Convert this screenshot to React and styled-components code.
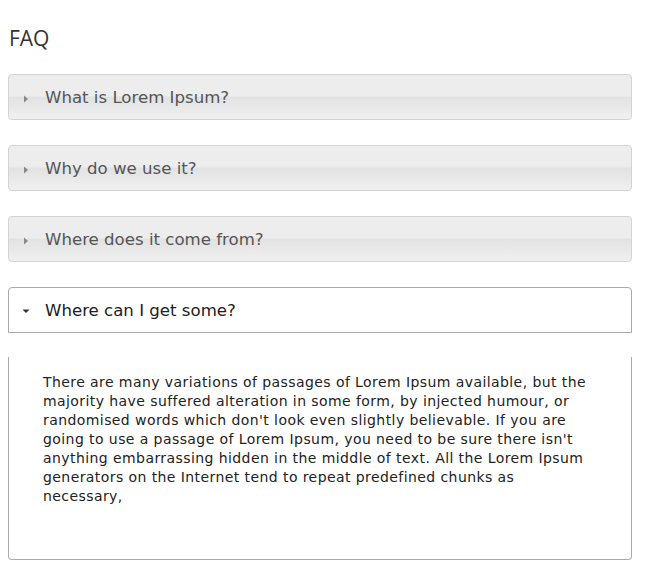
import React, { useState } from "react";
import styled, { createGlobalStyle } from "styled-components";

const Global = createGlobalStyle`
  html, body { margin: 0; padding: 0; background: #fff; }
  body { padding: 8px; font-family: "DejaVu Sans", Verdana, sans-serif; }
`;

const Page = styled.div`
  width: 624px;
  display: flex;
  flex-direction: column;
`;

const Title = styled.h2`
  margin: 15px 0 0 1px;
  font-family: "Open Sans", "Noto Sans", sans-serif;
  font-weight: 400;
  font-size: 21px;
  line-height: 30px;
  color: #333;
`;

const Accordion = styled.div`
  margin-top: 21px;
  display: flex;
  flex-direction: column;
  gap: 25px;
`;

const Item = styled.div`
  display: flex;
  flex-direction: column;
  gap: 24px;
`;

const Header = styled.button`
  box-sizing: border-box;
  height: 46px;
  width: 100%;
  display: flex;
  align-items: center;
  padding: 1px 0 0 11px;
  margin: 0;
  cursor: pointer;
  font-family: "DejaVu Sans", Verdana, sans-serif;
  font-size: 16.6px;
  text-align: left;
  border: 1px solid ${(p) => (p.$open ? "#aaa" : "#d3d3d3")};
  border-radius: ${(p) => (p.$open ? "4px 4px 0 0" : "4px")};
  color: ${(p) => (p.$open ? "#212121" : "#555")};
  background: ${(p) =>
    p.$open
      ? "#fff"
      : "linear-gradient(to bottom, #ededed 0%, #ededed 48%, #e2e2e2 50%, #f0f0f0 100%)"};
`;

const Arrow = styled.svg`
  width: 12px;
  height: 10px;
  margin-right: 13px;
  flex: none;
`;

const Content = styled.div`
  box-sizing: border-box;
  height: 203px;
  padding: 16px 40px 16px 34px;
  border: 1px solid #aaa;
  border-top: none;
  border-radius: 0 0 4px 4px;
  font-size: 14px;
  letter-spacing: 0.42px;
  line-height: 19px;
  color: #222;
`;

const items = [
  { q: "What is Lorem Ipsum?", a: "" },
  { q: "Why do we use it?", a: "" },
  { q: "Where does it come from?", a: "" },
  {
    q: "Where can I get some?",
    a: "There are many variations of passages of Lorem Ipsum available, but the majority have suffered alteration in some form, by injected humour, or randomised words which don't look even slightly believable. If you are going to use a passage of Lorem Ipsum, you need to be sure there isn't anything embarrassing hidden in the middle of text. All the Lorem Ipsum generators on the Internet tend to repeat predefined chunks as necessary,",
  },
];

export default function App() {
  const [open, setOpen] = useState(3);
  return (
    <Page>
      <Global />
      <Title>FAQ</Title>
      <Accordion>
        {items.map((it, i) => (
          <Item key={i}>
            <Header $open={open === i} onClick={() => setOpen(open === i ? -1 : i)}>
              <Arrow viewBox="0 0 12 10">
                {open === i ? (
                  <path d="M2.5 3.5 L9.5 3.5 L6 7 Z" fill="#333" />
                ) : (
                  <path d="M4 2.5 L8 6 L4 9.5 Z" fill="#888" />
                )}
              </Arrow>
              {it.q}
            </Header>
            {open === i && <Content>{it.a}</Content>}
          </Item>
        ))}
      </Accordion>
    </Page>
  );
}
